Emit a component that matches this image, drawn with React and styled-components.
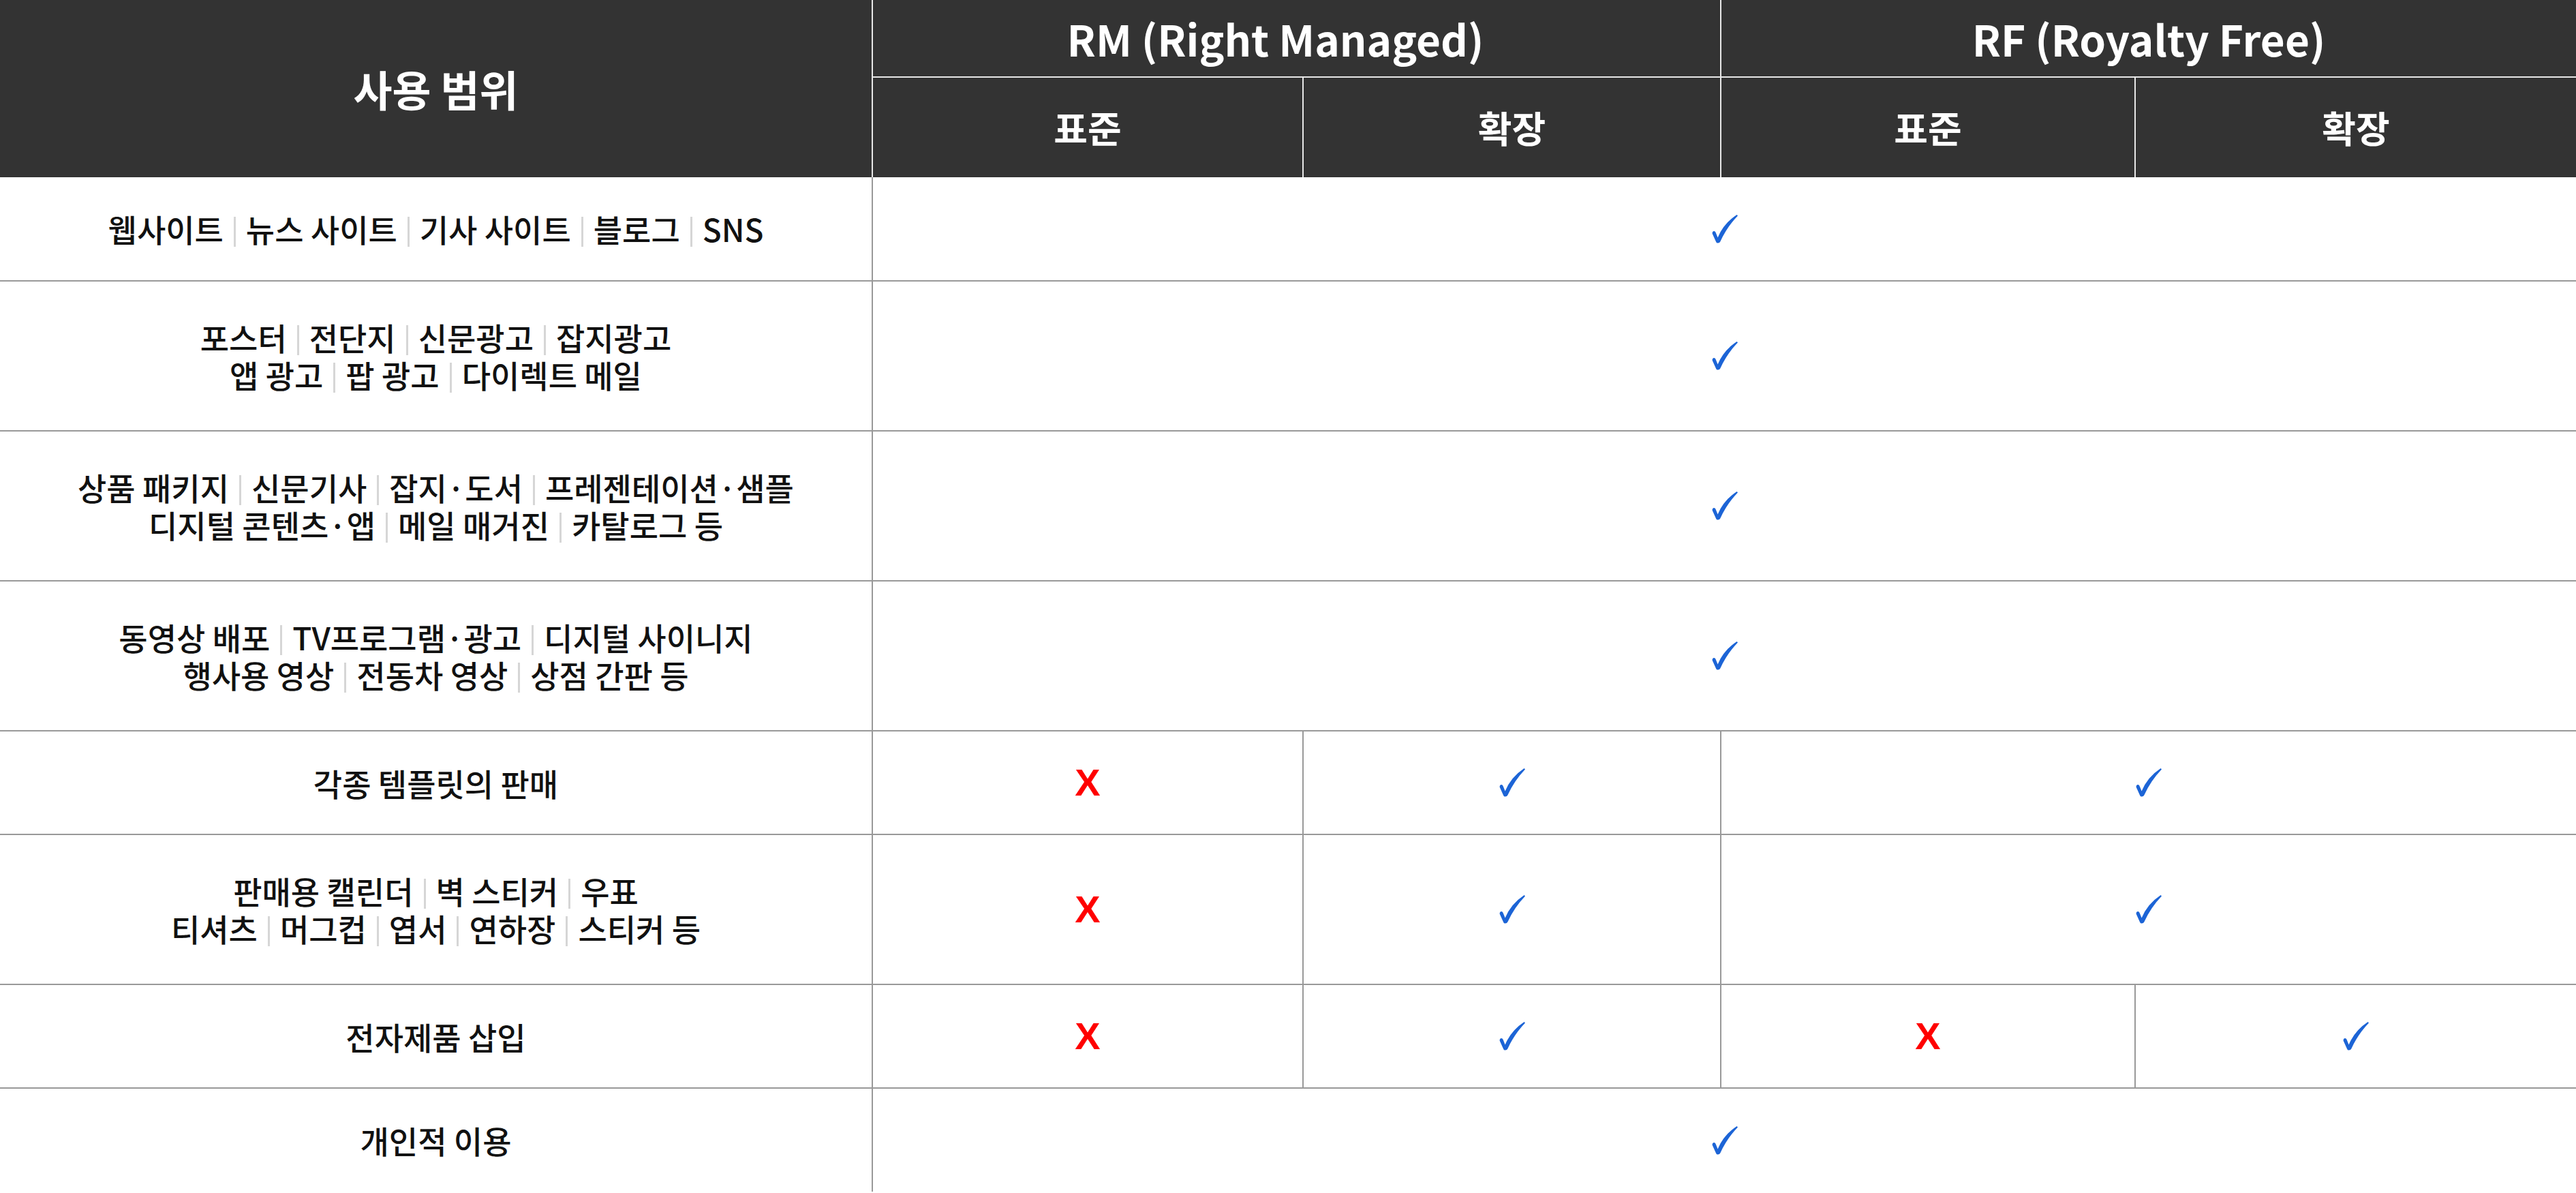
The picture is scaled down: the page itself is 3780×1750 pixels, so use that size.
import React from 'react';
import styled, { createGlobalStyle } from 'styled-components';

const GlobalStyle = createGlobalStyle`
  html, body {
    margin: 0;
    padding: 0;
    background: #fff;
  }
  body {
    font-family: "Noto Sans CJK KR", "Noto Sans", sans-serif;
  }
`

const Table = styled.table`
  width: 3780px;
  border-collapse: collapse;
  table-layout: fixed;
`

const HeadRow = styled.tr`
  height: ${p => p.$h}px;
`

const HeadCell = styled.th`
  background-color: #333333;
  color: #ffffff;
  font-weight: 700;
  font-size: ${p => (p.$sub ? 54 : 62)}px;
  line-height: 1.2;
  text-align: center;
  padding: 0 ${p => p.$padRight || 0}px 0 0;
  border-left: ${p => (p.$noLeft ? 'none' : '2px solid #e8e8e8')};
  border-bottom: ${p => (p.$lined ? '2px solid #e8e8e8' : 'none')};
`

const BodyRow = styled.tr`
  height: ${p => (p.$tall ? 220 : 152)}px;

  &:last-child td {
    border-bottom: none;
  }
`

const Cell = styled.td`
  text-align: center;
  vertical-align: middle;
  padding: 0;
  border-bottom: 2px solid #999999;
  border-left: 2px solid #999999;

  &:first-child {
    border-left: none;
  }
`

const Label = styled.div`
  font-size: 46px;
  line-height: 55px;
  font-weight: 500;
  color: #111111;
`

const Line = styled.div`
  white-space: nowrap;
`

const Sep = styled.span`
  display: inline-block;
  width: 3px;
  height: 44px;
  margin: 0 15px;
  background-color: #d6d6d6;
  vertical-align: -7px;
`

const Cross = styled.span`
  font-family: "Liberation Sans", Arial, sans-serif;
  font-weight: 700;
  font-size: 56px;
  line-height: 1;
  color: #ff0000;
`

const CheckSvg = styled.svg`
  display: inline-block;
  vertical-align: middle;
`

const Check = () => (
  <CheckSvg width="38" height="42" viewBox="0 0 38 42">
    <path
      d="M0.6 27.5 Q0.6 24 3.2 24 Q5.2 24 6 27 L8.6 33.5 Q17 13 36.6 0 L38 1.4 Q22 18 12.4 39.2 Q11.4 41.6 8.8 41.6 Q6.6 41.6 6 39.4 Z"
      fill="#1c64d6"
    />
  </CheckSvg>
)

const Mark = ({ v }) => (v ? <Check /> : <Cross>X</Cross>)

const rows = [
  { lines: [['웹사이트', '뉴스 사이트', '기사 사이트', '블로그', 'SNS']], marks: [[true, 4]] },
  {
    lines: [
      ['포스터', '전단지', '신문광고', '잡지광고'],
      ['앱 광고', '팝 광고', '다이렉트 메일'],
    ],
    marks: [[true, 4]],
  },
  {
    lines: [
      ['상품 패키지', '신문기사', '잡지·도서', '프레젠테이션·샘플'],
      ['디지털 콘텐츠·앱', '메일 매거진', '카탈로그 등'],
    ],
    marks: [[true, 4]],
  },
  {
    lines: [
      ['동영상 배포', 'TV프로그램·광고', '디지털 사이니지'],
      ['행사용 영상', '전동차 영상', '상점 간판 등'],
    ],
    marks: [[true, 4]],
  },
  { lines: [['각종 템플릿의 판매']], marks: [[false, 1], [true, 1], [true, 2]] },
  {
    lines: [
      ['판매용 캘린더', '벽 스티커', '우표'],
      ['티셔츠', '머그컵', '엽서', '연하장', '스티커 등'],
    ],
    marks: [[false, 1], [true, 1], [true, 2]],
  },
  { lines: [['전자제품 삽입']], marks: [[false, 1], [true, 1], [false, 1], [true, 1]] },
  { lines: [['개인적 이용']], marks: [[true, 4]] },
]

const App = () => {
  return (
    <>
      <GlobalStyle />
      <Table>
        <colgroup>
          <col style={{ width: '1280px' }} />
          <col style={{ width: '632px' }} />
          <col style={{ width: '613px' }} />
          <col style={{ width: '608px' }} />
          <col style={{ width: '647px' }} />
        </colgroup>
        <thead>
          <HeadRow $h={113}>
            <HeadCell rowSpan={2} $noLeft>사용 범위</HeadCell>
            <HeadCell colSpan={2} $lined $padRight={62}>RM (Right Managed)</HeadCell>
            <HeadCell colSpan={2} $lined>RF (Royalty Free)</HeadCell>
          </HeadRow>
          <HeadRow $h={147}>
            <HeadCell $sub>표준</HeadCell>
            <HeadCell $sub>확장</HeadCell>
            <HeadCell $sub>표준</HeadCell>
            <HeadCell $sub>확장</HeadCell>
          </HeadRow>
        </thead>
        <tbody>
          {rows.map((row, i) => (
            <BodyRow key={i} $tall={row.lines.length > 1}>
              <Cell>
                <Label>
                  {row.lines.map((items, j) => (
                    <Line key={j}>
                      {items.map((t, k) => (
                        <React.Fragment key={k}>
                          {k > 0 && <Sep />}
                          {t}
                        </React.Fragment>
                      ))}
                    </Line>
                  ))}
                </Label>
              </Cell>
              {row.marks.map(([v, span], j) => (
                <Cell key={j} colSpan={span}>
                  <Mark v={v} />
                </Cell>
              ))}
            </BodyRow>
          ))}
        </tbody>
      </Table>
    </>
  )
}

export default App
